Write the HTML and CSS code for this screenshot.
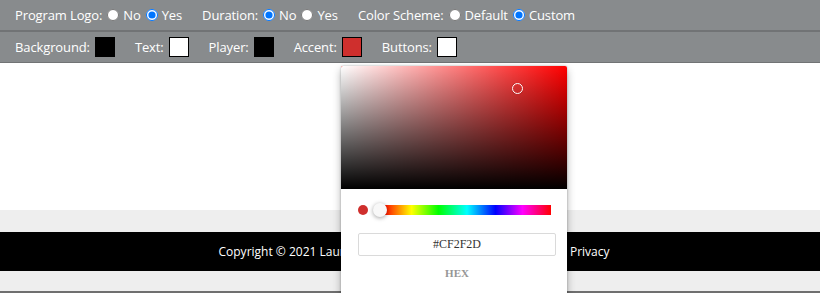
FILE: index.html
```html
<!DOCTYPE html>
<html>
<head>
<meta charset="utf-8">
<link rel="stylesheet" href="styles.css">
</head>
<body>
<div class="toolbar">
  <div class="row row-top">
    <div class="group">
      <span class="label">Program Logo:</span>
      <label class="opt"><input type="radio" name="logo"> No</label>
      <label class="opt"><input type="radio" name="logo" checked> Yes</label>
    </div>
    <div class="group">
      <span class="label">Duration:</span>
      <label class="opt"><input type="radio" name="dur" checked> No</label>
      <label class="opt"><input type="radio" name="dur"> Yes</label>
    </div>
    <div class="group">
      <span class="label">Color Scheme:</span>
      <label class="opt"><input type="radio" name="scheme"> Default</label>
      <label class="opt"><input type="radio" name="scheme" checked> Custom</label>
    </div>
  </div>
  <div class="row row-bottom">
    <div class="swatch-item"><span class="label">Background:</span><span class="swatch sw-black"></span></div>
    <div class="swatch-item"><span class="label">Text:</span><span class="swatch sw-white"></span></div>
    <div class="swatch-item"><span class="label">Player:</span><span class="swatch sw-black"></span></div>
    <div class="swatch-item"><span class="label">Accent:</span><span class="swatch sw-red"></span></div>
    <div class="swatch-item"><span class="label">Buttons:</span><span class="swatch sw-white"></span></div>
  </div>
</div>
<div class="content"></div>
<div class="band"></div>
<footer class="footer">
  <div class="footer-inner">
    <span>Copyright © 2021 Laurel Media Group</span>
    <span>Privacy</span>
  </div>
</footer>
<div class="band band-bottom"></div>
<div class="edge"></div>

<div class="picker">
  <div class="saturation">
    <div class="sat-white"></div>
    <div class="sat-black"></div>
    <div class="sat-pointer"></div>
  </div>
  <div class="picker-body">
    <div class="hue-row">
      <span class="active-color"></span>
      <div class="hue">
        <span class="hue-thumb"></span>
      </div>
    </div>
    <div class="hex-field">#CF2F2D</div>
    <div class="hex-label">HEX</div>
  </div>
</div>
</body>
</html>
```

FILE: styles.css
```css
html, body {
  margin: 0;
  padding: 0;
  background: #ffffff;
  font-family: "Open Sans", "Liberation Sans", sans-serif;
  overflow: hidden;
}

.toolbar {
  background: #888b8d;
  color: #ffffff;
  font-size: 13px;
  letter-spacing: -0.12px;
}

.row {
  display: flex;
  align-items: center;
  padding-left: 15px;
  gap: 20px;
}

.row-top {
  height: 30px;
  border-bottom: 2px solid #717375;
}

.row-bottom {
  height: 30px;
  border-bottom: 1px solid #717375;
}

.group {
  display: flex;
  align-items: center;
}

.opt {
  display: flex;
  align-items: center;
}

.opt input {
  margin: 0 4px 0 5px;
  width: 12px;
  height: 12px;
}

.swatch-item {
  display: flex;
  align-items: center;
  gap: 5px;
}

.swatch {
  display: block;
  width: 18px;
  height: 18px;
  border: 1px solid #000;
}

.sw-black { background: #000000; }
.sw-white { background: #ffffff; }
.sw-red { background: #cf2f2d; }

.content {
  height: 147px;
  background: #ffffff;
}

.band {
  height: 22px;
  background: #eeeeee;
}

.band-bottom {
  height: 20px;
}

.edge {
  height: 4px;
  background: #6f6f6f;
}

.footer {
  height: 39px;
  background: #000000;
  color: #ffffff;
  font-size: 12px;
  display: flex;
  align-items: center;
  justify-content: center;
}

.footer-inner {
  width: 391px;
  display: flex;
  justify-content: space-between;
  margin-left: 8px;
}

.picker {
  position: absolute;
  left: 341px;
  top: 66px;
  width: 226px;
  height: 240px;
  background: #ffffff;
  border-radius: 2px;
  box-shadow: 0 0 2px rgba(0,0,0,0.3), 0 4px 8px rgba(0,0,0,0.3);
}

.saturation {
  position: relative;
  height: 123px;
  background: #ff0000;
  border-radius: 2px 2px 0 0;
  overflow: hidden;
}

.sat-white {
  position: absolute;
  inset: 0;
  background: linear-gradient(to right, #fff, rgba(255,255,255,0));
}

.sat-black {
  position: absolute;
  inset: 0;
  background: linear-gradient(to top, #000, rgba(0,0,0,0));
}

.sat-pointer {
  position: absolute;
  left: 171px;
  top: 17px;
  width: 9px;
  height: 9px;
  border: 1.5px solid #fff;
  border-radius: 50%;
  box-shadow: 0 0 1px rgba(0,0,0,0.3);
}

.picker-body {
  padding: 16px 12px 0 17px;
}

.hue-row {
  display: flex;
  align-items: center;
  height: 10px;
}

.active-color {
  width: 10px;
  height: 10px;
  border-radius: 50%;
  background: #cf2f2d;
  margin-right: 15px;
}

.hue {
  position: relative;
  width: 168px;
  height: 10px;
  background: linear-gradient(to right, #f00 0%, #ff0 17%, #0f0 33%, #0ff 50%, #00f 67%, #f0f 83%, #f00 100%);
}

.hue-thumb {
  position: absolute;
  left: -10px;
  top: -2px;
  width: 14px;
  height: 14px;
  border-radius: 50%;
  background: #f8f8f8;
  box-shadow: 0 1px 4px rgba(0,0,0,0.37);
}

.hex-field {
  margin-top: 18px;
  width: 196px;
  height: 21px;
  border: 1px solid #dadada;
  border-radius: 2px;
  box-sizing: content-box;
  display: flex;
  align-items: center;
  justify-content: center;
  font-family: "Liberation Serif", serif;
  font-size: 12px;
  color: #333;
}

.hex-label {
  margin-top: 11px;
  width: 198px;
  text-align: center;
  font-family: "Liberation Serif", serif;
  font-weight: bold;
  font-size: 11px;
  color: #969696;
}
```
